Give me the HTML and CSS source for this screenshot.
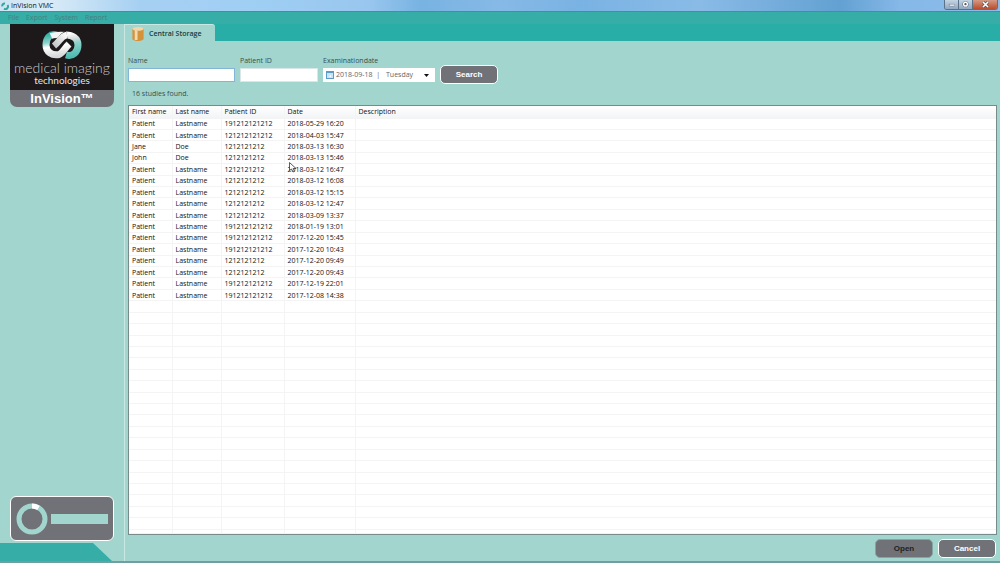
FILE: index.html
```html
<!DOCTYPE html>
<html lang="en">
<head>
<meta charset="utf-8">
<title>InVision VMC</title>
<link rel="stylesheet" href="styles.css">
</head>
<body>
<header class="titlebar">
  <svg class="app-icon" viewBox="0 0 8 8"><path d="M4 1.5A2.4 2.4 0 0 0 1.3 4.4" /><path d="M3 6.7A2.6 2.6 0 0 0 6.5 3" /></svg>
  <h1 class="app-title">InVision VMC</h1>
  <div class="window-buttons">
    <button class="win-btn" aria-label="Minimize"><svg viewBox="0 0 14 9"><rect x="4.500" y="4.500" width="6" height="2" fill="#fff" stroke="#667" stroke-width=".5"/></svg></button>
    <button class="win-btn" aria-label="Restore"><svg viewBox="0 0 14 9"><circle cx="7" cy="4.500" r="3.200" fill="#556"/><circle cx="7" cy="4.500" r="2" fill="#556" stroke="#fff" stroke-width="1.500"/></svg></button>
    <button class="win-btn win-close" aria-label="Close"><svg viewBox="0 0 24 9"><path d="M10 2l5 5M15 2l-5 5" stroke="#555" stroke-width="3"/><path d="M10 2l5 5M15 2l-5 5" stroke="#fff" stroke-width="1.600"/></svg></button>
  </div>
</header>
<nav class="menubar">
  <button class="menu-item">File</button>
  <button class="menu-item">Export</button>
  <button class="menu-item">System</button>
  <button class="menu-item">Report</button>
</nav>
<div class="workspace">
  <aside class="sidebar">
    <div class="brand">
      <div class="brand-top">
        <svg class="brand-mark" viewBox="0 0 40 28">
          <defs>
            <linearGradient id="left" gradientUnits="userSpaceOnUse" x1="8" y1="3" x2="12" y2="26"><stop offset="0" stop-color="#35b0a5"/><stop offset=".35" stop-color="#8ed3cb"/><stop offset=".55" stop-color="#fff"/><stop offset="1" stop-color="#d5d7d8"/></linearGradient>
            <linearGradient id="right" gradientUnits="userSpaceOnUse" x1="28" y1="2" x2="32" y2="25"><stop offset="0" stop-color="#fff"/><stop offset=".25" stop-color="#d8dcdc"/><stop offset=".45" stop-color="#8ed3cb"/><stop offset="1" stop-color="#4fbcb2"/></linearGradient>
            <linearGradient id="bar" gradientUnits="userSpaceOnUse" x1="14" y1="16" x2="27" y2="4"><stop offset="0" stop-color="#c4c7c8"/><stop offset="1" stop-color="#fff"/></linearGradient>
          </defs>
          <g fill="none" stroke-width="7">
            <path d="M15 4C8 2 4 7 4 14C4 21 10 25 17 23.500C21 22 23 17 27 13" stroke="url(#left)"/>
            <path d="M24 24C31 26 36 21 36 14C36 7 30 4 24 4" stroke="url(#right)"/>
            <path d="M9 5C13 3 19 3.500 26 4" stroke="#f4f5f5" stroke-width="6"/>
            <path d="M25 4.500C20 5.500 19 11 13 15.500" stroke="#1d191b" stroke-width="8.500"/>
            <path d="M25 4C19 5 18 10 12 15" stroke="url(#bar)" stroke-width="6.500"/>
          </g>
        </svg>
        <p class="brand-name">medical imaging</p>
        <p class="brand-sub">technologies</p>
      </div>
      <p class="brand-product">InVision™</p>
    </div>
    <div class="status">
      <svg class="status-ring" viewBox="0 0 32 32"><circle cx="16" cy="16" r="13" fill="none" stroke="#a2d5ce" stroke-width="5"/><path d="M16 3A13 13 0 0 1 22.500 4.800" fill="none" stroke="#fff" stroke-width="5"/></svg>
      <div class="status-bar"></div>
    </div>
    <div class="sidebar-foot"></div>
  </aside>
  <main class="content">
    <div class="tabs">
      <button class="tab">
        <svg class="tab-icon" viewBox="0 0 12 15"><path d="M0 2v11c2 2.500 10 2.500 12 0V2z" fill="#d6923b"/><path d="M2.500 3v11h3V4z" fill="#f3d9ae"/><ellipse cx="6" cy="2" rx="6" ry="2" fill="#f1d6ac"/></svg>
        Central Storage
      </button>
    </div>
    <form class="search">
      <div class="field field-name"><label for="name">Name</label><input id="name" type="text"></div>
      <div class="field field-pid"><label for="pid">Patient ID</label><input id="pid" type="text"></div>
      <div class="field field-date"><label for="date">Examinationdate</label>
        <button class="date-box" id="date" type="button">
          <svg class="cal" viewBox="0 0 8 8"><rect x=".5" y=".5" width="7" height="7" fill="#c9e4f4" stroke="#5b9cc9"/><path d="M1 1.500h6" stroke="#5b9cc9"/><path d="M3 6l2-2v2z" fill="#fff"/></svg>
          <span>2018-09-18&nbsp; |</span><span class="weekday">Tuesday</span>
          <svg class="caret" viewBox="0 0 5 3"><path d="M0 0h5L2.500 3z"/></svg>
        </button>
      </div>
      <button class="btn btn-search" type="button">Search</button>
    </form>
    <p class="count">16 studies found.</p>
    <div class="list">
      <table class="studies">
        <colgroup><col class="c-first"><col class="c-last"><col class="c-pid"><col class="c-date"><col></colgroup>
        <thead><tr><th>First name</th><th>Last name</th><th>Patient ID</th><th>Date</th><th>Description</th></tr></thead>
        <tbody id="rows"></tbody>
      </table>
      <svg class="cursor" viewBox="0 0 8 11"><path d="M.5 .5v8l2-1.500 1.500 3 1.500-.7-1.400-2.800H7z" fill="#fff" stroke="#333" stroke-width=".8"/></svg>
    </div>
    <div class="actions">
      <button class="btn btn-disabled" disabled>Open</button>
      <button class="btn">Cancel</button>
    </div>
  </main>
</div>
<script src="app.js"></script>
</body>
</html>
```
FILE: styles.css
```css
* { box-sizing: border-box; }

body {
  margin: 0;
  height: 100vh;
  display: flex;
  flex-direction: column;
  overflow: hidden;
  font: 7px/10px "Open Sans", "Noto Sans", sans-serif;
  color: #1c2b2b;
  background: #a2d5ce;
  border-bottom: 2px solid #6f9fa3;
}

h1, p { margin: 0; font-weight: 400; }
button, input { font: inherit; color: inherit; border: 0; padding: 0; margin: 0; }
svg { display: block; flex: none; }

.titlebar {
  height: 12px;
  flex: none;
  display: flex;
  align-items: center;
  gap: 2px;
  padding-left: 1px;
  border-bottom: 1px solid #667f92;
  background: linear-gradient(90deg, #cfe4f3 0, #d9ebf7 5%, #a6d0f2 14%, #a0cff4 25%, #98c6ee 37%, #78b3e2 42%, #86b9e6 50%, #79b3e3 58%, #8abbe7 70%, #62a1d2 84%, #86b8e8 90%, #8cbdea 100%);
}
.app-icon { width: 8px; height: 8px; fill: none; stroke: #2fa89f; stroke-width: 2; }
.app-title { font-size: 7px; color: #111; }
.window-buttons {
  margin: 0 2px 0 auto;
  align-self: flex-start;
  display: flex;
  border: 1px solid #5d7186;
  border-top: 0;
  border-radius: 0 0 3px 3px;
  overflow: hidden;
}
.win-btn { width: 14px; height: 9px; background: linear-gradient(#c4d5e4, #8fa9c0); border-right: 1px solid #5d7186; }
.win-close { width: 24px; border: 0; background: linear-gradient(#d49a84, #bd4c2c); }

.menubar {
  height: 12px;
  flex: none;
  display: flex;
  align-items: center;
  gap: 7px;
  padding-left: 8px;
  background: #36ada7;
}
.menu-item { background: none; color: #4e7d7c; }

.workspace { flex: 1; min-height: 0; display: grid; grid-template-columns: 125px 1fr; }

.sidebar { display: flex; flex-direction: column; border-right: 1px solid #c9e8e3; }
.brand {
  margin: 0 10px;
  border-radius: 0 0 7px 7px;
  overflow: hidden;
  text-align: center;
  color: #fff;
  background: #707278;
}
.brand-top { height: 66px; padding-top: 7px; background: #1d191b; }
.brand-mark { width: 40px; height: 28px; margin: 0 auto; }
.brand-name { font: 300 14px/16px Lato, sans-serif; color: #c9cbcc; white-space: nowrap; margin-top: 1px; }
.brand-sub { font: 10px/8px Lato, sans-serif; color: #e6e6e6; }
.brand-product { font: bold 13px/17px "Liberation Sans", sans-serif; }

.status {
  margin: auto 10px 2px 10px;
  height: 45px;
  display: flex;
  align-items: center;
  gap: 3px;
  padding: 0 5px;
  border: 1px solid #fff;
  border-radius: 6px;
  background: #707278;
}
.status-ring { width: 32px; height: 32px; }
.status-bar { flex: 1; height: 10px; background: #a2d5ce; }
.sidebar-foot {
  height: 18px;
  width: 112px;
  background: #36ada7;
  clip-path: polygon(0 0, 93px 0, 100% 100%, 0 100%);
}

.content { min-width: 0; min-height: 0; display: flex; flex-direction: column; }
.tabs { height: 17px; flex: none; display: flex; background: #29ada7; }
.tab {
  width: 90px;
  display: flex;
  align-items: center;
  gap: 5px;
  padding: 2px 0 0 7px;
  border-top: 1px solid #c9e8e3;
  border-radius: 0 3px 0 0;
  background: #a2d5ce;
  font-weight: 600;
  white-space: nowrap;
  color: #173c3c;
}
.tab-icon { width: 12px; height: 14px; }

.search { display: flex; align-items: flex-end; gap: 5px; padding: 14px 3px 0; }
.field { display: flex; flex-direction: column; gap: 2px; color: #35504f; }
.field-name { width: 107px; }
.field-pid { width: 78px; }
.field-date { width: 112px; }
.field label { padding-top: 1px; }
.field input { width: 100%; height: 14px; padding: 0 3px; background: #fff; border: 1px solid #d9e6ea; }
.field-name input { border-color: #83b5d6; }
.date-box { height: 14px; display: flex; align-items: center; gap: 2px; padding: 0 6px 0 3px; background: #fff; color: #666; }
.cal { width: 8px; height: 8px; }
.weekday { margin-left: 4px; }
.caret { width: 5px; height: 3px; margin-left: auto; fill: #111; }

.btn {
  width: 58px;
  height: 19px;
  border: 1px solid #fff;
  border-radius: 5px;
  background: #707278;
  color: #fff;
  font: bold 8px/10px "Liberation Sans", sans-serif;
}
.btn-search { margin-bottom: -2px; }
.btn-disabled { border-color: #85a5a3; color: #222; }

.count { padding: 7px 7px 0; line-height: 10px; color: #35504f; }

.list {
  flex: 1;
  min-height: 0;
  position: relative;
  margin: 6px 3px 0;
  border: 1px solid #768b8a;
  background: #fff;
}
.studies { width: 100%; height: 100%; table-layout: fixed; border-collapse: collapse; line-height: 9px; color: #111; }
.c-first { width: 43px; }
.c-last { width: 49px; }
.c-pid { width: 63px; }
.c-date { width: 71px; }
.studies th, .studies td { padding: 0 3px; text-align: left; font-weight: 400; white-space: nowrap; border: 0 solid #f4f4f4; border-width: 0 1px 1px 0; }
.studies th:last-child, .studies td:last-child { border-right: 0; }
.studies thead tr { height: 12px; background: linear-gradient(#fff, #f3f4f6); }
.studies .tail { height: 4px; line-height: 0; }
.cursor { position: absolute; left: 160px; top: 56px; width: 8px; height: 11px; }

.actions { display: flex; justify-content: flex-end; gap: 5px; padding: 4px 4px 3px; }
```
FILE: app.js
```javascript
const studies = [
  ["Patient", "Lastname", "191212121212", "2018-05-29 16:20"],
  ["Patient", "Lastname", "121212121212", "2018-04-03 15:47"],
  ["Jane", "Doe", "1212121212", "2018-03-13 16:30"],
  ["John", "Doe", "1212121212", "2018-03-13 15:46"],
  ["Patient", "Lastname", "1212121212", "2018-03-12 16:47"],
  ["Patient", "Lastname", "1212121212", "2018-03-12 16:08"],
  ["Patient", "Lastname", "1212121212", "2018-03-12 15:15"],
  ["Patient", "Lastname", "1212121212", "2018-03-12 12:47"],
  ["Patient", "Lastname", "1212121212", "2018-03-09 13:37"],
  ["Patient", "Lastname", "191212121212", "2018-01-19 13:01"],
  ["Patient", "Lastname", "191212121212", "2017-12-20 15:45"],
  ["Patient", "Lastname", "191212121212", "2017-12-20 10:43"],
  ["Patient", "Lastname", "1212121212", "2017-12-20 09:49"],
  ["Patient", "Lastname", "1212121212", "2017-12-20 09:43"],
  ["Patient", "Lastname", "191212121212", "2017-12-19 22:01"],
  ["Patient", "Lastname", "191212121212", "2017-12-08 14:38"]
];
const visibleRows = 36;
const body = document.getElementById("rows");
for (let i = 0; i <= visibleRows; i++) {
  const row = body.insertRow();
  const study = studies[i] || [];
  if (i === visibleRows) row.className = "tail";
  for (let c = 0; c < 5; c++) {
    row.insertCell().textContent = study[c] || (i < visibleRows && c === 0 ? "\u00a0" : "");
  }
}
```
